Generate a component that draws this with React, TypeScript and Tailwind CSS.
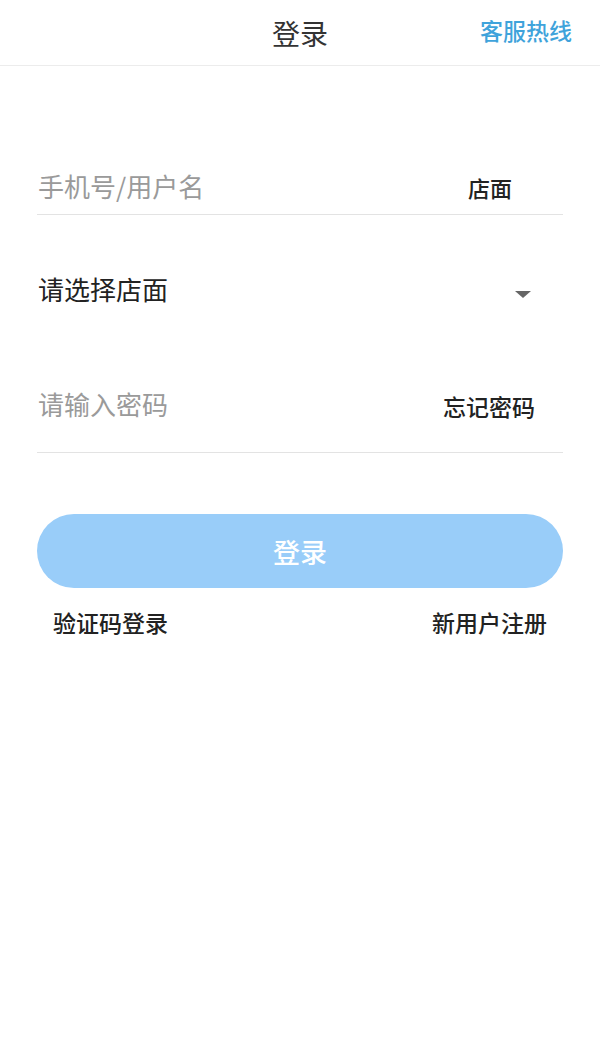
import React from "react";

const font = { fontFamily: '"Noto Sans CJK SC", "Noto Sans", sans-serif' };

export default function App() {
  return (
    <div className="w-[600px] h-[1039px] bg-white flex flex-col" style={font}>
      <div className="relative h-[66px] border-b border-[#ececec] flex items-center justify-center shrink-0">
        <span className="text-[28px] text-[#333] leading-none">登录</span>
        <span className="absolute right-[28px] top-[19px] text-[23px] leading-none font-medium text-[#3fa3db]">客服热线</span>
      </div>

      <div className="px-[37px] flex flex-col">
        <div className="mt-[90px] h-[59px] border-b border-[#e3e3e3] flex items-start justify-between">
          <span className="text-[26px] leading-none text-[#9a9a9a] pt-[17px] pl-px">手机号/用户名</span>
          <span className="text-[22px] leading-none text-[#222] font-medium pt-[20px] pr-[51px]">店面</span>
        </div>

        <div className="h-[116px] flex items-start justify-between">
          <span className="text-[26px] leading-none text-[#222] pt-[61px] pl-px">请选择店面</span>
          <span className="mt-[76px] mr-[32px] w-0 h-0 border-l-[8px] border-r-[8px] border-t-[7px] border-l-transparent border-r-transparent border-t-[#666]"></span>
        </div>

        <div className="h-[122px] border-b border-[#e3e3e3] flex items-start justify-between">
          <span className="text-[26px] leading-none text-[#9a9a9a] pt-[60px] pl-px">请输入密码</span>
          <span className="text-[23px] leading-none text-[#222] font-medium pt-[64px] pr-[28px]">忘记密码</span>
        </div>

        <button className="mt-[61px] h-[74px] w-full rounded-full bg-[#99cdf9] flex items-center justify-center">
          <span className="text-[27px] leading-none text-white font-medium">登录</span>
        </button>

        <div className="mt-[23px] flex justify-between px-[16px]">
          <span className="text-[23px] leading-none text-[#222] font-medium">验证码登录</span>
          <span className="text-[23px] leading-none text-[#222] font-medium">新用户注册</span>
        </div>
      </div>
    </div>
  );
}
